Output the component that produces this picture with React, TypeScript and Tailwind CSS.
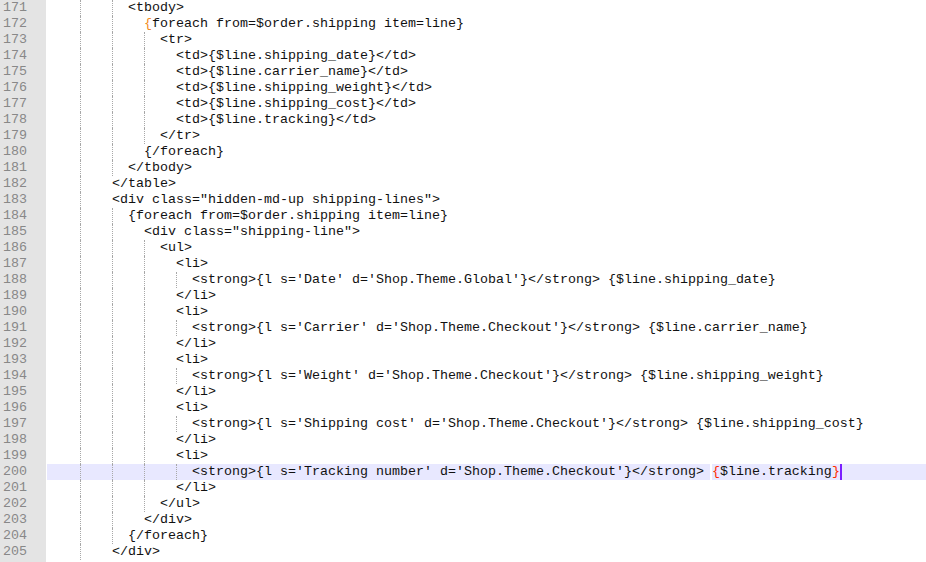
type Seg = { t: string; c?: string }
type Line = { n: number; indent: number; segs: Seg[]; current?: boolean }

const plain = (n: number, indent: number, text: string): Line => ({ n, indent, segs: [{ t: text }] })

const lines: Line[] = [
  plain(171, 10, '<tbody>'),
  { n: 172, indent: 12, segs: [{ t: '{', c: 'text-[#f28a1c]' }, { t: 'foreach from=$order.shipping item=line}' }] },
  plain(173, 14, '<tr>'),
  plain(174, 16, '<td>{$line.shipping_date}</td>'),
  plain(175, 16, '<td>{$line.carrier_name}</td>'),
  plain(176, 16, '<td>{$line.shipping_weight}</td>'),
  plain(177, 16, '<td>{$line.shipping_cost}</td>'),
  plain(178, 16, '<td>{$line.tracking}</td>'),
  plain(179, 14, '</tr>'),
  plain(180, 12, '{/foreach}'),
  plain(181, 10, '</tbody>'),
  plain(182, 8, '</table>'),
  plain(183, 8, '<div class="hidden-md-up shipping-lines">'),
  plain(184, 10, '{foreach from=$order.shipping item=line}'),
  plain(185, 12, '<div class="shipping-line">'),
  plain(186, 14, '<ul>'),
  plain(187, 16, '<li>'),
  plain(188, 18, "<strong>{l s='Date' d='Shop.Theme.Global'}</strong> {$line.shipping_date}"),
  plain(189, 16, '</li>'),
  plain(190, 16, '<li>'),
  plain(191, 18, "<strong>{l s='Carrier' d='Shop.Theme.Checkout'}</strong> {$line.carrier_name}"),
  plain(192, 16, '</li>'),
  plain(193, 16, '<li>'),
  plain(194, 18, "<strong>{l s='Weight' d='Shop.Theme.Checkout'}</strong> {$line.shipping_weight}"),
  plain(195, 16, '</li>'),
  plain(196, 16, '<li>'),
  plain(197, 18, "<strong>{l s='Shipping cost' d='Shop.Theme.Checkout'}</strong> {$line.shipping_cost}"),
  plain(198, 16, '</li>'),
  plain(199, 16, '<li>'),
  {
    n: 200,
    indent: 18,
    current: true,
    segs: [
      { t: "<strong>{l s='Tracking number' d='Shop.Theme.Checkout'}</strong>" },
      { t: ' ', c: 'gap' },
      { t: '{', c: 'text-[#ff2a00]' },
      { t: '$line.tracking' },
      { t: '}', c: 'text-[#ff2a00]' },
    ],
  },
  plain(201, 16, '</li>'),
  plain(202, 14, '</ul>'),
  plain(203, 12, '</div>'),
  plain(204, 10, '{/foreach}'),
  plain(205, 8, '</div>'),
]

// indentation split into 4-column tab stops, a dotted guide on each stop after the first
function Indent({ cols }: { cols: number }) {
  const parts: number[] = []
  let left = cols
  while (left > 0) {
    parts.push(Math.min(4, left))
    left -= 4
  }
  return (
    <>
      {parts.map((w, i) => (
        <span
          key={i}
          className={
            (w === 4 ? 'w-[32px] ' : 'w-[16px] ') +
            'shrink-0 h-4 box-border ' +
            (i > 0 ? 'border-l border-dotted border-[#a8a8a8]' : '')
          }
        />
      ))}
    </>
  )
}

function CodeRow({ line }: { line: Line }) {
  return (
    <div className={'flex h-4 items-stretch pl-px ' + (line.current ? 'bg-[#e8e8ff]' : '')}>
      <Indent cols={line.indent} />
      {line.segs.map((s, i) =>
        s.c === 'gap' ? (
          <span key={i} className="w-[8px] h-4 shrink-0 box-border border-r-2 border-white" />
        ) : (
          <span key={i} className={'whitespace-pre leading-4 ' + (s.c ?? 'text-[#111]')}>
            {s.t}
          </span>
        )
      )}
      {line.current && <span className="w-[2px] h-4 bg-[#7b1fff] shrink-0" />}
    </div>
  )
}

export default function App() {
  return (
    <div className="flex h-[562px] w-full overflow-hidden bg-white font-['Liberation_Mono','Courier_New',monospace] text-[13.33px]">
      <div className="w-[46px] shrink-0 bg-[#e4e4e4] text-[#888888]">
        {lines.map((l) => (
          <div key={l.n} className="h-4 leading-4 pl-[3px]">
            {l.n}
          </div>
        ))}
      </div>
      <div className="flex-1 ml-px">
        {lines.map((l) => (
          <CodeRow key={l.n} line={l} />
        ))}
      </div>
    </div>
  )
}
